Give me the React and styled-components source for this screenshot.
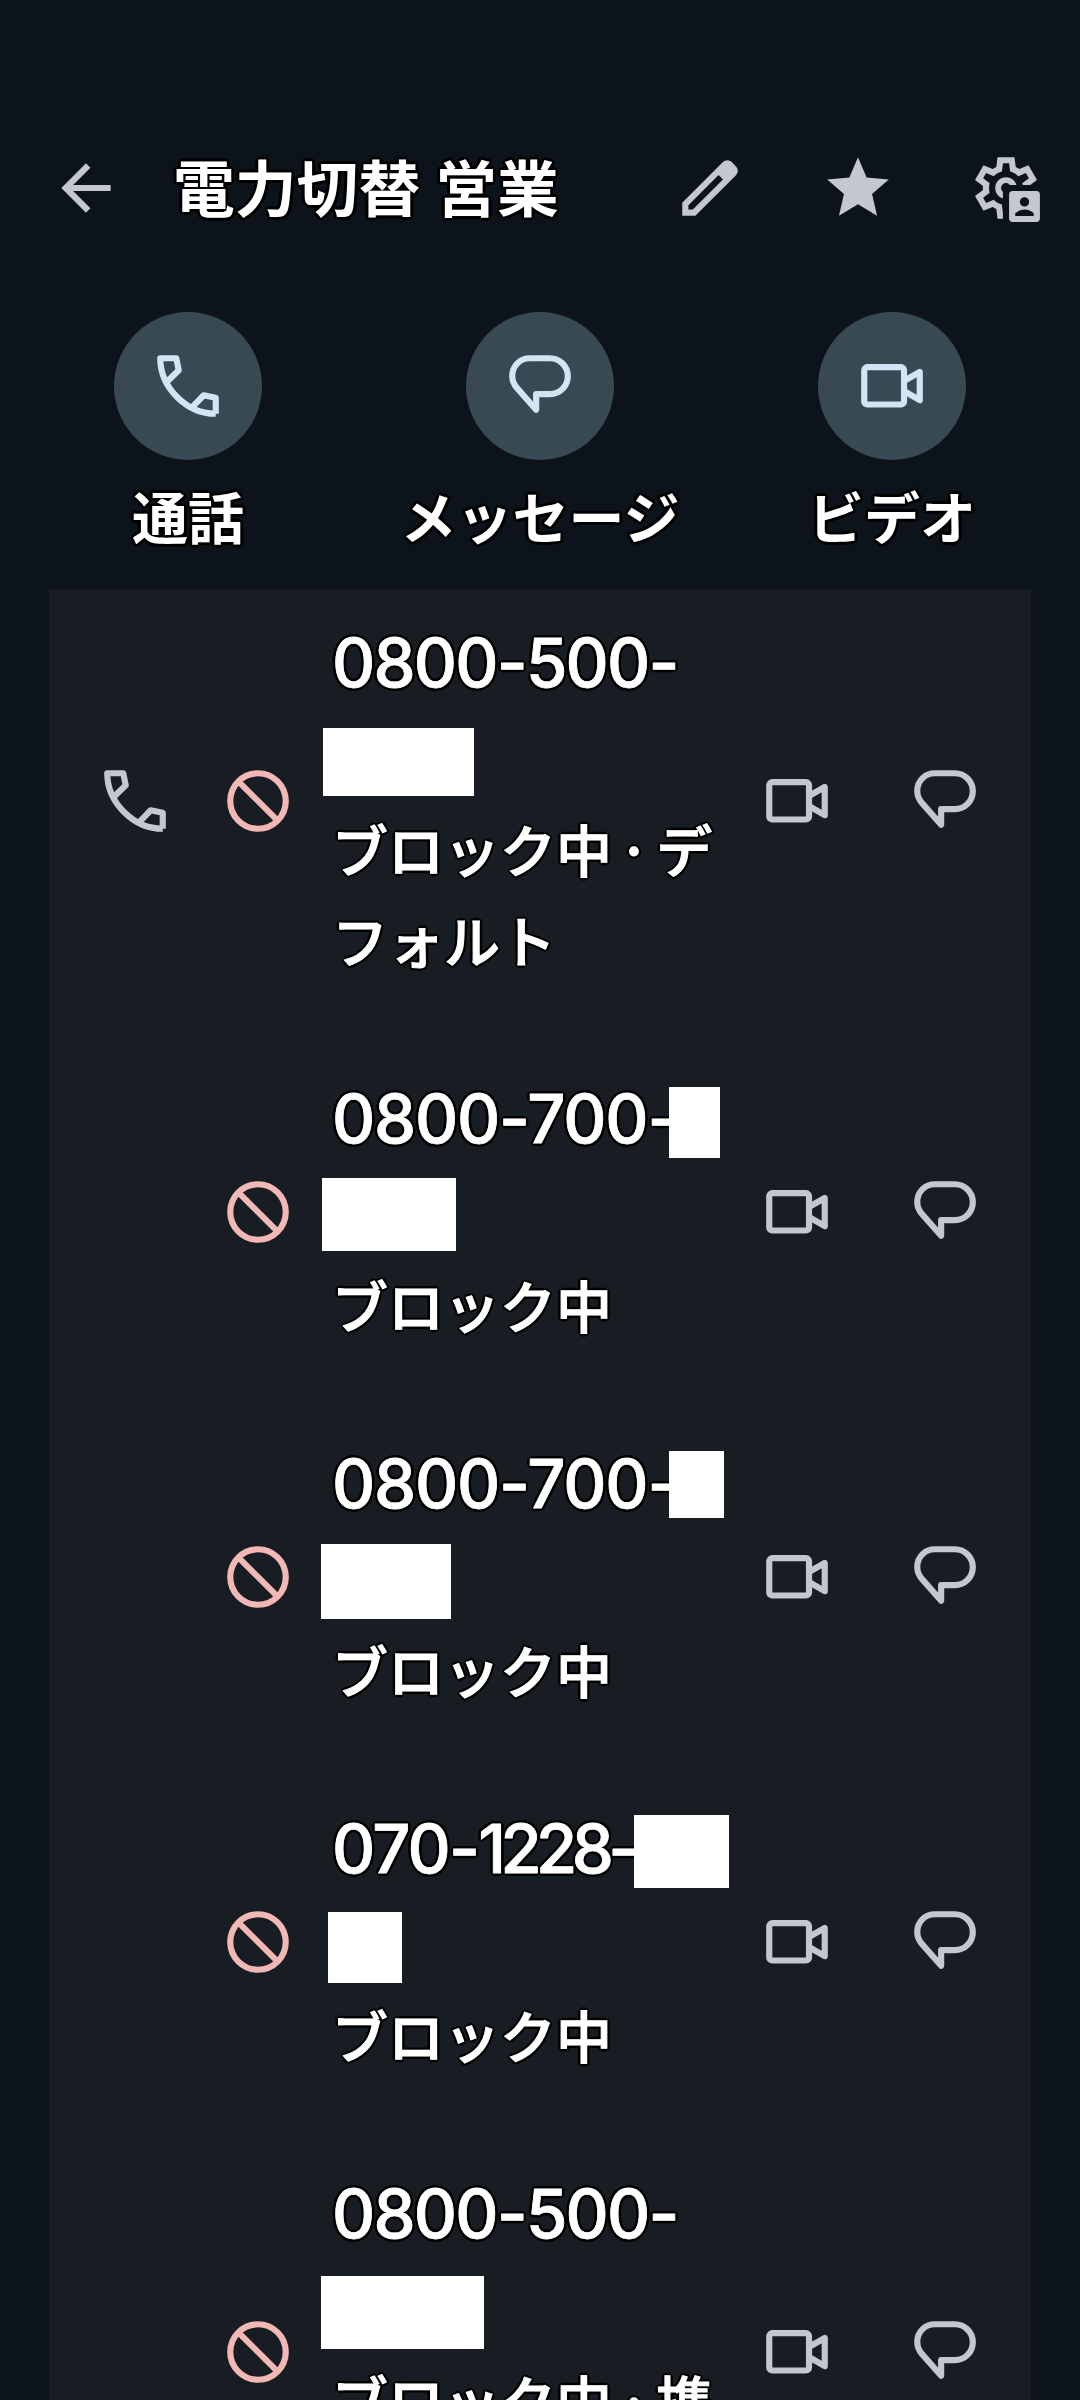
import styled, { createGlobalStyle } from 'styled-components'

const GlobalStyle = createGlobalStyle`
  body {
    background: #0c131a;
    font-family: Inter, 'Noto Sans CJK JP', sans-serif;
    margin: 0;
  }
`

const Screen = styled.main`
  background: #0c131a;
  box-sizing: border-box;
  display: flex;
  flex-direction: column;
  height: 2400px;
  overflow: hidden;
  padding: 151px 0 0;
  width: 1080px;
`

const OutlinedText = styled.span`
  color: #fff;
  font-family: 'Noto Sans CJK JP', sans-serif;
  font-weight: 700;
  text-shadow:
    3px 0 #000,
    -3px 0 #000,
    0 3px #000,
    0 -3px #000,
    2.1px 2.1px #000,
    -2.1px 2.1px #000,
    2.1px -2.1px #000,
    -2.1px -2.1px #000;
  white-space: pre;
`

const Icon = styled.svg.attrs({ viewBox: '0 0 24 24' })`
  color: ${({ $color }) => $color || '#c3c7d0'};
  display: block;
  fill: currentColor;
  flex: none;
  height: 74px;
  width: 74px;
`

const LineIcon = styled(Icon)`
  fill: none;
  stroke: currentColor;
  stroke-linejoin: round;
  stroke-width: 2;
`

const TopBar = styled.header`
  align-items: center;
  display: flex;
  flex: none;
  height: 74px;
  padding: 0 37px 0 49px;
`

const Title = styled(OutlinedText).attrs({ as: 'h1' })`
  flex: 1;
  font-size: 61.8px;
  line-height: 74px;
  margin: -7px 0 0 50px;
  word-spacing: 1px;
`

const TopActions = styled.div`
  display: flex;
  gap: 74px;
`

const QuickActions = styled.nav`
  display: grid;
  flex: none;
  grid-template-columns: repeat(3, 352px);
  height: 277px;
  margin: 87px 0 0 12px;
`

const QuickAction = styled.div`
  align-items: center;
  display: flex;
  flex-direction: column;
`

const Circle = styled.div`
  align-items: center;
  background: #394953;
  border-radius: 50%;
  display: flex;
  height: 148px;
  justify-content: center;
  width: 148px;
`

const QuickLabel = styled(OutlinedText)`
  font-size: 56px;
  line-height: 80px;
  margin-top: 15px;
`

const Card = styled.section`
  background: #181c23;
  display: flex;
  flex: none;
  flex-direction: column;
  gap: 32px;
  margin: 0 49px;
`

const Row = styled.article`
  align-items: center;
  display: grid;
  grid-template-columns: 123px 111px 428px 148px 74px;
  padding: 25px 49px;
`

const NumberLine = styled.div`
  height: 94px;
  line-height: 98px;
  position: relative;
`

const Digits = styled(OutlinedText)`
  -webkit-text-stroke: 0.8px #fff;
  font-family: Inter, sans-serif;
  font-size: 67px;
  font-weight: 500;
  letter-spacing: ${({ $spacing }) => $spacing}px;
`

// covers the private part of a number
const Redaction = styled.div`
  background: #fff;
  height: ${({ $h }) => $h}px;
  left: ${({ $x }) => $x}px;
  position: absolute;
  top: ${({ $y }) => $y}px;
  width: ${({ $w }) => $w}px;
`

const Status = styled.div`
  padding-bottom: 4px;
`

const StatusLine = styled(OutlinedText)`
  -webkit-text-stroke: 1.1px #fff;
  display: block;
  font-size: 56px;
  font-weight: 500;
  height: 91px;
  line-height: 92px;
  word-spacing: -6.5px;
`

function BackIcon() {
  return (
    <Icon>
      <path d="m7.825 13 5.6 5.6L12 20l-8-8 8-8 1.425 1.4-5.6 5.6H20v2z" />
    </Icon>
  )
}

function EditIcon() {
  return (
    <Icon>
      <path
        fillRule="evenodd"
        d="M5 19h1.425L16.2 9.225 14.775 7.8 5 17.575zm-2 2v-4.25L16.2 3.575q.3-.275.663-.425t.762-.15.775.15.65.45L20.425 5q.3.275.438.65T21 6.4q0 .4-.137.763t-.438.662L7.25 21z"
      />
    </Icon>
  )
}

function StarIcon() {
  return (
    <Icon>
      <path d="m5.825 21 1.625-7.025L2 9.25l7.2-.625L12 2l2.8 6.625 7.2.625-5.45 4.725L18.175 21 12 17.275z" />
    </Icon>
  )
}

function ContactSettingsIcon() {
  return (
    <Icon>
      <clipPath id="gear-corner">
        <path d="M0 0h24v11H11v13H0z" />
      </clipPath>
      <g clipPath="url(#gear-corner)" fillRule="evenodd">
        <path d="m9.25 22-.4-3.2q-.325-.125-.612-.3t-.563-.375L4.7 19.375l-2.75-4.75 2.575-1.95Q4.5 12.5 4.5 12.338v-.675q0-.163.025-.338L1.95 9.375l2.75-4.75 2.975 1.25q.275-.2.575-.375t.6-.3l.4-3.2h5.5l.4 3.2q.325.125.613.3t.562.375l2.975-1.25 2.75 4.75-2.575 1.95q.025.175.025.338v.674q0 .163-.05.338l2.575 1.95-2.75 4.75-2.95-1.25q-.275.2-.575.375t-.6.3l-.4 3.2zM11 20h1.975l.35-2.65q.775-.2 1.438-.587t1.212-.938l2.475 1.025.975-1.7-2.15-1.625q.125-.35.175-.737T17.5 12t-.05-.787-.175-.738l2.15-1.625-.975-1.7-2.475 1.05q-.55-.575-1.212-.962t-1.438-.588L13 4h-1.975l-.35 2.65q-.775.2-1.437.588t-1.213.937L5.55 7.15l-.975 1.7 2.15 1.6q-.125.375-.175.75t-.05.8q0 .4.05.775t.175.75l-2.15 1.625.975 1.7 2.475-1.05q.55.575 1.213.963t1.437.587z" />
        <path d="M12 8.5a3.5 3.5 0 1 0 0 7 3.5 3.5 0 0 0 0-7m0 1.9a1.6 1.6 0 1 1 0 3.2 1.6 1.6 0 0 1 0-3.2" />
      </g>
      <path
        fillRule="evenodd"
        d="M14.2 13h7.6q1.2 0 1.2 1.2v7.6q0 1.2-1.2 1.2h-7.6Q13 23 13 21.8v-7.6Q13 13 14.2 13M18 15a1.5 1.5 0 1 0 0 3 1.5 1.5 0 0 0 0-3m-3 6.1h6v-.9q-1.3-1.2-3-1.2t-3 1.2z"
      />
    </Icon>
  )
}

function CallIcon({ color }) {
  return (
    <LineIcon $color={color}>
      <path d="M21 21C11.5 21 3 12.5 3 3H8.2L9 6.9 5.5 10.3M21 21V15.8L17.1 15 13.7 18.5" />
    </LineIcon>
  )
}

function MessageIcon({ color }) {
  return (
    <LineIcon $color={color}>
      <path d="M10.75 14.65H15.2A5.82 5.82 0 0 0 15.2 3H8.7C5.5 3 3 5.5 3 8.7c0 1.5.5 2.8 1.5 3.9L10.75 19.7z" />
    </LineIcon>
  )
}

function VideoIcon({ color }) {
  return (
    <LineIcon $color={color}>
      <rect x="3" y="5.9" width="12.9" height="12.1" rx="1" />
      <path d="M16 10.3 21 7.45V16.6L16 13.7" />
    </LineIcon>
  )
}

function BlockIcon() {
  return (
    <LineIcon $color="#f2b8b5">
      <circle cx="12" cy="12" r="9" />
      <path d="m5.7 5.7 12.6 12.6" />
    </LineIcon>
  )
}

const contacts = [
  {
    number: [{ text: '0800-500-', spacing: -1.8 }],
    redactions: [{ x: -9, y: 114, w: 151, h: 68 }],
    status: ['ブロック中 · デ', 'フォルト'],
    primary: true,
  },
  {
    number: [{ text: '0800-700-', spacing: -1.2 }],
    redactions: [
      { x: 337, y: 17, w: 51, h: 71 },
      { x: -10, y: 108, w: 134, h: 73 },
    ],
    status: ['ブロック中'],
  },
  {
    number: [{ text: '0800-700-', spacing: -1.2 }],
    redactions: [
      { x: 337, y: 16, w: 55, h: 67 },
      { x: -11, y: 109, w: 130, h: 75 },
    ],
    status: ['ブロック中'],
  },
  {
    number: [
      { text: '070-', spacing: -1.8 },
      { text: '1228-', spacing: -5.6 },
    ],
    redactions: [
      { x: 302, y: 15, w: 95, h: 73 },
      { x: -4, y: 112, w: 74, h: 71 },
    ],
    status: ['ブロック中'],
  },
  {
    number: [{ text: '0800-500-', spacing: -1.8 }],
    redactions: [{ x: -11, y: 111, w: 163, h: 73 }],
    status: ['ブロック中 · 携', ''],
  },
]

function ContactRow({ number, primary, redactions, status }) {
  return (
    <Row>
      <div>{primary && <CallIcon />}</div>
      <BlockIcon />
      <div>
        <NumberLine>
          {number.map(({ text, spacing }) => (
            <Digits key={text} $spacing={spacing}>
              {text}
            </Digits>
          ))}
          {redactions.map(({ x, y, w, h }) => (
            <Redaction key={y} $x={x} $y={y} $w={w} $h={h} />
          ))}
        </NumberLine>
        <NumberLine />
        <Status>
          {status.map((line) => (
            <StatusLine key={line}>{line}</StatusLine>
          ))}
        </Status>
      </div>
      <VideoIcon />
      <MessageIcon />
    </Row>
  )
}

export default function App() {
  return (
    <>
      <GlobalStyle />
      <Screen>
        <TopBar>
          <BackIcon />
          <Title>電力切替 営業</Title>
          <TopActions>
            <EditIcon />
            <StarIcon />
            <ContactSettingsIcon />
          </TopActions>
        </TopBar>
        <QuickActions>
          <QuickAction>
            <Circle>
              <CallIcon color="#d3e5f5" />
            </Circle>
            <QuickLabel>通話</QuickLabel>
          </QuickAction>
          <QuickAction>
            <Circle>
              <MessageIcon color="#d3e5f5" />
            </Circle>
            <QuickLabel>メッセージ</QuickLabel>
          </QuickAction>
          <QuickAction>
            <Circle>
              <VideoIcon color="#d3e5f5" />
            </Circle>
            <QuickLabel>ビデオ</QuickLabel>
          </QuickAction>
        </QuickActions>
        <Card>
          {contacts.map((contact, index) => (
            <ContactRow key={index} {...contact} />
          ))}
        </Card>
      </Screen>
    </>
  )
}
